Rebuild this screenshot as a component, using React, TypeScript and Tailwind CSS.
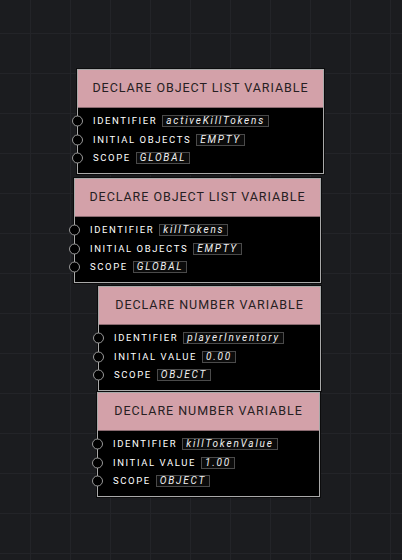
import React from "react";

type Field = { label: string; value: string };

type NodeData = {
  title: string;
  pos: string;
  fields: Field[];
};

const nodes: NodeData[] = [
  {
    title: "DECLARE OBJECT LIST VARIABLE",
    pos: "left-[77px] top-[69px] w-[247px]",
    fields: [
      { label: "IDENTIFIER", value: "activeKillTokens" },
      { label: "INITIAL OBJECTS", value: "EMPTY" },
      { label: "SCOPE", value: "GLOBAL" },
    ],
  },
  {
    title: "DECLARE OBJECT LIST VARIABLE",
    pos: "left-[74px] top-[178px] w-[247px]",
    fields: [
      { label: "IDENTIFIER", value: "killTokens" },
      { label: "INITIAL OBJECTS", value: "EMPTY" },
      { label: "SCOPE", value: "GLOBAL" },
    ],
  },
  {
    title: "DECLARE NUMBER VARIABLE",
    pos: "left-[98px] top-[286px] w-[223px]",
    fields: [
      { label: "IDENTIFIER", value: "playerInventory" },
      { label: "INITIAL VALUE", value: "0.00" },
      { label: "SCOPE", value: "OBJECT" },
    ],
  },
  {
    title: "DECLARE NUMBER VARIABLE",
    pos: "left-[97px] top-[392px] w-[223px]",
    fields: [
      { label: "IDENTIFIER", value: "killTokenValue" },
      { label: "INITIAL VALUE", value: "1.00" },
      { label: "SCOPE", value: "OBJECT" },
    ],
  },
];

const font = { fontFamily: "Roboto, 'Liberation Sans', sans-serif" };

function Port() {
  return (
    <span className="absolute left-[-6px] top-1/2 -translate-y-1/2 w-[11px] h-[11px] rounded-full border border-[#999] bg-black" />
  );
}

function VarNode({ node }: { node: NodeData }) {
  return (
    <div className={`absolute ${node.pos} border border-[#a9a9a9] bg-black shadow-[0_0_0_1px_#0c0c0d]`}>
      <div className="h-[38px] bg-[#d3a1a9] flex items-center justify-center border-b border-[#8a6a70]">
        <span className="text-[12.5px] tracking-[0.95px] text-[#262022]" style={font}>
          {node.title}
        </span>
      </div>
      <div className="pt-[4px] pb-[5px] flex flex-col">
        {node.fields.map((f) => (
          <div key={f.label} className="relative h-[18.5px] flex items-center pl-[15px] gap-[5px]">
            <Port />
            <span className="text-[9.5px] tracking-[1.6px] text-white" style={font}>
              {f.label}
            </span>
            <span
              className="text-[10px] italic tracking-[1.8px] text-[#f0f0f0] border border-[#4a4a4a] bg-[#0b0b0b] px-[3px] leading-[10px] h-[12px] flex items-center"
              style={font}
            >
              {f.value}
            </span>
          </div>
        ))}
      </div>
    </div>
  );
}

export default function App() {
  return (
    <div className="relative w-[402px] h-[560px] overflow-hidden bg-[#1b1c1f]">
      <svg className="absolute inset-0" width="402" height="560">
        <defs>
          <pattern id="grid" x="30" y="33" width="40" height="40" patternUnits="userSpaceOnUse">
            <path d="M0 0.5H40M0.5 0V40" stroke="#232428" strokeWidth="1" fill="none" />
          </pattern>
        </defs>
        <rect width="402" height="560" fill="url(#grid)" />
      </svg>
      {nodes.map((n, i) => (
        <VarNode key={i} node={n} />
      ))}
    </div>
  );
}
